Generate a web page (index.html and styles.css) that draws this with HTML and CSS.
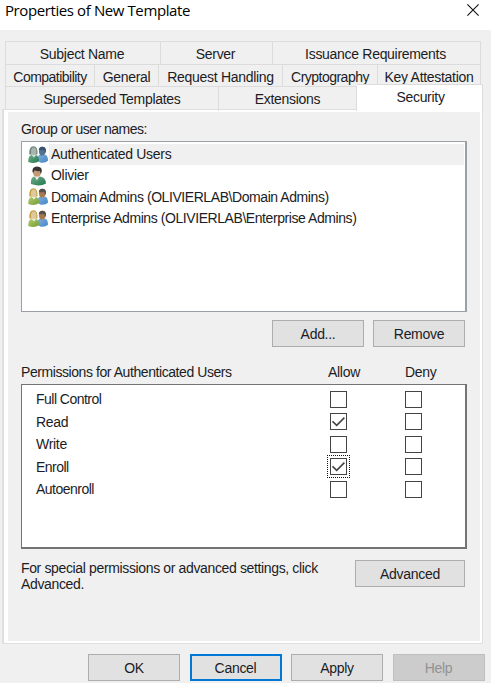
FILE: index.html
```html
<!DOCTYPE html>
<html lang="en">
<head>
<meta charset="utf-8">
<title>Properties of New Template</title>
<link rel="stylesheet" href="styles.css">
</head>
<body>
<svg class="defs" width="0" height="0" aria-hidden="true">
  <defs>
    <linearGradient id="green" x1="0" y1="0" x2="1" y2="1"><stop offset="0" stop-color="#72ae8c"/><stop offset="1" stop-color="#22784d"/></linearGradient>
    <linearGradient id="lime" x1="0" y1="0" x2="1" y2="1"><stop offset="0" stop-color="#b3ca70"/><stop offset="1" stop-color="#759c35"/></linearGradient>
    <linearGradient id="blue" x1="0" y1="0" x2="1" y2="1"><stop offset="0" stop-color="#82b0dc"/><stop offset="1" stop-color="#4385c7"/></linearGradient>
    <symbol id="group" viewBox="0 0 20 17" preserveAspectRatio="none">
      <path d="M9.5 13.5Q9.2 9 12 8L15 9 17 8Q20 9 20 14Q17 16.5 12 15.6Z" fill="url(#blue)"/>
      <ellipse cx="14.2" cy="5" rx="3.2" ry="4.2" fill="#a9784e"/>
      <path d="M10.8 4Q10.8.6 14.5.6Q18.5.8 18 5L17 7 16.4 3.7Q13 4.2 10.8 4Z" fill="#57504b"/>
      <path d="M.3 15Q0 9.5 3.3 8.5L6 9.5 8.5 8.5Q11.5 10 11 14.5Q6 17.3 .3 15Z" fill="url(#lime)"/>
      <path d="M1.3 8Q.8.3 5.5.3Q10.2.5 9.4 8Z" fill="#c4a347"/>
      <ellipse cx="5.7" cy="5.4" rx="2.7" ry="4" fill="#e0c99c"/>
      <path d="M3.8 8.2L6 11 7.5 8.4Z" fill="#edf0da"/>
    </symbol>
    <symbol id="wellknown" viewBox="0 0 20 17" preserveAspectRatio="none">
      <path d="M9.5 13.5Q9.2 9 12 8L15 9 17 8Q20 9 20 14Q17 16.5 12 15.6Z" fill="url(#blue)"/>
      <ellipse cx="14.2" cy="5" rx="3.2" ry="4.2" fill="#527391"/>
      <path d="M10.8 4Q10.8.6 14.5.6Q18.5.8 18 5L17 7 16.4 3.7Q13 4.2 10.8 4Z" fill="#38566f"/>
      <path d="M.3 15Q0 9.5 3.3 8.5L6 9.5 8.5 8.5Q11.5 10 11 14.5Q6 17.3 .3 15Z" fill="url(#green)"/>
      <path d="M1.3 8Q.8.3 5.5.3Q10.2.5 9.4 8Z" fill="#72847c"/>
      <ellipse cx="5.7" cy="5.4" rx="2.7" ry="4" fill="#a8b6ad"/>
      <path d="M3.8 8.2L6 11 7.5 8.4Z" fill="#dbe7df"/>
    </symbol>
    <symbol id="user" viewBox="0 0 20 20">
      <path d="M3 18Q2.3 12 6 10.5L9 12 12 10.5Q17.5 11 18 17.5Q12 21 3 18Z" fill="url(#green)"/>
      <ellipse cx="9" cy="6.4" rx="3.9" ry="5" fill="#c29b74"/>
      <path d="M4.5 6Q3.8.6 9 .5Q14.7.6 13.7 6L12.7 8 12 5Q9 5.5 7 4.2Q5.8 5 5.4 7Z" fill="#363330"/>
      <path d="M6.5 10.5L9 14.5 11.3 10.5Z" fill="#eee7dd"/>
    </symbol>
  </defs>
</svg>

<div class="dialog">
  <header class="titlebar">
    <h1>Properties of New Template</h1>
    <svg class="close" viewBox="0 0 12 12"><path d="M.4.4L11.6 11.6M11.6.4L.4 11.6"/></svg>
  </header>

  <nav class="tabs">
    <div class="tabrow top"><span class="tab">Subject Name</span><span class="tab">Server</span><span class="tab">Issuance Requirements</span></div>
    <div class="tabrow middle"><span class="tab tight">Compatibility</span><span class="tab">General</span><span class="tab">Request Handling</span><span class="tab tight">Cryptography</span><span class="tab">Key Attestation</span></div>
    <div class="tabrow bottom"><span class="tab">Superseded Templates</span><span class="tab">Extensions</span><span class="tab active">Security</span></div>
  </nav>

  <main class="panel">
    <div class="label tight">Group or user names:</div>
    <ul class="names">
      <li class="selected"><svg><use href="#wellknown"/></svg><span>Authenticated Users</span></li>
      <li><svg class="single"><use href="#user"/></svg><span>Olivier</span></li>
      <li><svg><use href="#group"/></svg><span class="snug">Domain Admins (OLIVIERLAB\Domain Admins)</span></li>
      <li><svg><use href="#group"/></svg><span class="snug">Enterprise Admins (OLIVIERLAB\Enterprise Admins)</span></li>
    </ul>
    <div class="list-actions"><button>Add...</button><button>Remove</button></div>

    <div class="perm-head"><span class="snug">Permissions for Authenticated Users</span><span>Allow</span><span>Deny</span></div>
    <div class="perms">
      <div class="perm"><span class="tight">Full Control</span><i class="box"></i><i class="box"></i></div>
      <div class="perm"><span>Read</span><i class="box"><svg viewBox="0 0 13 13"><path d="M.5 6.3L4.7 10.3L12.4 2.6"/></svg></i><i class="box"></i></div>
      <div class="perm"><span>Write</span><i class="box"></i><i class="box"></i></div>
      <div class="perm"><span class="tight">Enroll</span><i class="box focus"><svg viewBox="0 0 13 13"><path d="M.5 6.3L4.7 10.3L12.4 2.6"/></svg></i><i class="box"></i></div>
      <div class="perm"><span class="tight">Autoenroll</span><i class="box"></i><i class="box"></i></div>
    </div>

    <div class="special"><p>For special permissions or advanced settings, click<br>Advanced.</p><button>Advanced</button></div>
  </main>

  <footer class="actions"><button>OK</button><button class="default">Cancel</button><button>Apply</button><button disabled>Help</button></footer>
</div>
</body>
</html>
```
FILE: styles.css
```css
* { box-sizing: border-box; }
body {
  margin: 0;
  background: #f0f0f0;
  color: #1c1c24;
  font: 14px/16px "Liberation Sans", Arial, sans-serif;
  letter-spacing: -0.3px;
}
.snug { letter-spacing: -0.43px; }
.tight { letter-spacing: -0.52px; }
.defs { position: absolute; }
.dialog { width: 491px; height: 683px; overflow: hidden; }

.titlebar {
  display: flex;
  justify-content: space-between;
  height: 30px;
  padding: 0 12px 0 5px;
  background: #fff;
}
h1 {
  margin: 0;
  color: #000;
  font: 400 15px/21px "Open Sans", "Noto Sans", sans-serif;
  letter-spacing: -0.4px;
}
.close { width: 12px; height: 12px; margin-top: 4px; fill: none; stroke: #111; stroke-width: 1.1; }

.tabs { padding: 11px 9px 0 5px; }
.tabrow { display: grid; height: 23px; border-left: 1px solid #dcdcdc; }
.tabrow.top { grid-template-columns: 155px 112px 208px; }
.tabrow.middle { grid-template-columns: 89px 64px 124px 95px 103px; height: 22px; }
.tabrow.bottom { grid-template-columns: 213px 138px 126px; }
.tabrow.top .tab { padding-right: 2px; }
.tab {
  padding-top: 4px;
  border: solid #dcdcdc;
  border-width: 1px 1px 0 0;
  text-align: center;
  white-space: nowrap;
}
.tab.active {
  height: 27px;
  margin-top: -2px;
  padding-left: 2px;
  background: #fff;
  position: relative;
}

.panel {
  width: 481px;
  height: 535px;
  margin-left: 2px;
  padding: 11px 15px 0 14px;
  border: solid #dfdfdf;
  border-width: 1px 1px 1px 2px;
  box-shadow: inset 4px 2px #fff, inset -2px -2px #fff;
}
.label { height: 20px; margin: 0 3px; }
.names {
  height: 171px;
  margin: 0 0 0 3px;
  width: 446px;
  padding: 2px 1px;
  border: 2px solid #9b9fa8;
  border-width: 1px 2px 1px 1px;
  background: #fff;
  list-style: none;
}
.names li { display: flex; align-items: center; height: 21.3px; padding-left: 5px; }
.names svg { width: 20px; height: 18px; flex: none; }
.names svg.single { height: 20px; }
.names span { flex: 1; padding: 2px 0 3px 2px; margin-left: 1px; white-space: nowrap; }
.names .selected span { background: #f0f0f0; }

button {
  width: 92px;
  height: 27px;
  padding: 1px 0 0;
  border: 1px solid #adadad;
  background: #e1e1e1;
  color: inherit;
  font: inherit;
  letter-spacing: inherit;
}
.list-actions { display: flex; justify-content: flex-end; gap: 9px; margin: 8px 2px 0 0; }
.perm-head {
  display: grid;
  grid-template-columns: 286px 75px 75px;
  height: 19px;
  margin: 17px 0 1px 3px;
}
.perm-head span:nth-child(n+2) { padding-left: 21px; }
.perm-head span:nth-child(3) { padding-left: 23px; }
.perms {
  width: 446px;
  height: 165px;
  margin-left: 3px;
  padding: 3px 0 0 14px;
  border: 1px solid #747474;
  border-width: 1px 2px 2px 1px;
  background: #fff;
}
.perm { display: grid; grid-template-columns: 294px 75px 30px; align-items: center; height: 22.5px; }
.box { width: 17px; height: 17px; border: 1px solid #444; display: flex; align-items: center; justify-content: center; }
.box svg { width: 13px; height: 13px; fill: none; stroke: #444; stroke-width: 1.6; }
.box.focus { outline: 1px dotted #111; outline-offset: 2px; }

.special { display: flex; justify-content: space-between; margin: 11px 2px 0 3px; }
.special p { margin: 0; letter-spacing: -0.36px; }
.special button { width: 110px; }

.actions { display: flex; justify-content: flex-end; gap: 9.5px; padding: 10px 6.5px 0 0; }
.actions .default { border: 2px solid #0078d7; }
button:disabled { border-color: #bfbfbf; background: #ccc; color: #929292; }
```
